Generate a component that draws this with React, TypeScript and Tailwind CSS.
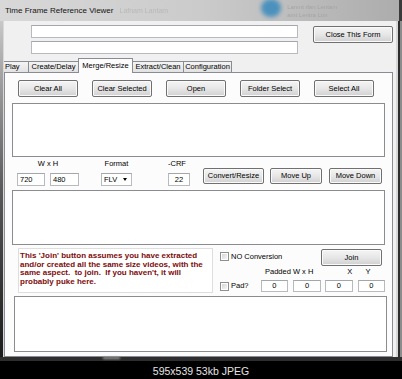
const font = "font-['Liberation_Sans',Arial,sans-serif]";

type BoxProps = {
    label?: string;
    className?: string;
};

const Btn = ({ label, className }: BoxProps) => (
    <div
        className={`flex items-center justify-center rounded-[2px] border border-[#707070] bg-linear-to-b from-[#f4f4f4] via-[#e7e7e7] to-[#d0d0d0] shadow-[inset_0_0_0_1px_#fafafa] text-[7.5px] leading-none text-black whitespace-nowrap ${className}`}
    >
        {label}
    </div>
);

const TextBox = ({ label, className }: BoxProps) => (
    <div
        className={`flex items-center border border-[#b8bac0] border-t-[#a3a6ad] bg-white text-[7.5px] leading-none text-black ${className}`}
    >
        {label}
    </div>
);

const ListBox = ({ className }: BoxProps) => (
    <div className={`border border-[#8a8c90] bg-white ${className}`} />
);

const Check = ({ label }: BoxProps) => (
    <div className="flex items-center">
        <div className="w-[9px] h-[9px] border border-[#8e8f8f] bg-white p-[1px]">
            <div className="w-full h-full bg-linear-to-br from-[#d6d6d6] to-[#f6f6f6]" />
        </div>
        <span className="ml-[2px] text-[7.5px] leading-none text-black whitespace-nowrap">
            {label}
        </span>
    </div>
);

const App = () => {
    return (
        <div
            className={`w-[402px] h-[379px] bg-black flex flex-col overflow-hidden ${font}`}
        >
            <div className="h-[361px] flex flex-col">
                {/* title bar */}
                <div className="h-[21px] flex items-center bg-linear-to-r from-[#d8d8d8] via-[#cbcbcb] to-[#acacac] overflow-hidden">
                    <span className="ml-[5px] text-[8px] leading-none text-[#141414] whitespace-nowrap">
                        Time Frame Reference Viewer
                    </span>
                    <span className="ml-[6px] text-[7px] leading-none text-[#b8b8b8] blur-[0.6px] whitespace-nowrap">
                        Lafnam Lantam
                    </span>
                    <div className="ml-[93px] -mt-[6px] w-[20px] h-[18px] rounded-full bg-[#2f86bd] blur-[2px] opacity-80" />
                    <div className="ml-[6px] flex flex-col gap-[2px] text-[6px] leading-none text-[#a4a4a4] blur-[0.7px] whitespace-nowrap">
                        <span>Lanmt rlan Lentam</span>
                        <span>amt Lentra Ltm</span>
                    </div>
                    <div className="ml-auto w-[3px] h-full bg-[#3a3a3a]" />
                </div>

                <div className="flex-1 flex">
                    {/* left frame */}
                    <div className="w-[4px] flex">
                        <div className="w-[3px] bg-linear-to-b from-[#c8c8c8] via-[#5a5a5a] to-[#1c1c1c]" />
                        <div className="w-[1px] bg-[#d8d8d8]" />
                    </div>

                    {/* client area */}
                    <div className="w-[392px] bg-[#f0f0f0] flex flex-col">
                        <div className="h-[37px] flex">
                            <div className="ml-[27px] mt-[4px] flex flex-col gap-[3px]">
                                <TextBox className="w-[267px] h-[13px]" />
                                <TextBox className="w-[267px] h-[13px]" />
                            </div>
                            <Btn
                                label="Close This Form"
                                className="ml-[15px] mt-[5px] w-[80px] h-[17px]"
                            />
                        </div>

                        {/* tabs */}
                        <div className="h-[15px] flex items-end relative z-10 text-[7.5px] leading-none text-black whitespace-nowrap">
                            <div className="w-[25px] h-[11px] mb-[1px] flex items-center pl-[1px] border-t border-r border-[#898c95] bg-linear-to-b from-[#f4f4f4] to-[#e2e2e2]">
                                Play
                            </div>
                            <div className="w-[51px] h-[11px] mb-[1px] -ml-[1px] flex items-center justify-center border-t border-x border-[#898c95] bg-linear-to-b from-[#f4f4f4] to-[#e2e2e2]">
                                Create/Delay
                            </div>
                            <div className="w-[55px] h-[15px] -ml-[1px] flex items-center justify-center pb-[1px] border-t border-x border-[#898c95] bg-[#fcfcfc]">
                                Merge/Resize
                            </div>
                            <div className="w-[52px] h-[11px] mb-[1px] -ml-[1px] flex items-center justify-center border-t border-x border-[#898c95] bg-linear-to-b from-[#f4f4f4] to-[#e2e2e2]">
                                Extract/Clean
                            </div>
                            <div className="w-[49px] h-[11px] mb-[1px] -ml-[1px] flex items-center justify-center border-t border-x border-[#898c95] bg-linear-to-b from-[#f4f4f4] to-[#e2e2e2]">
                                Configuration
                            </div>
                        </div>

                        {/* tab page */}
                        <div className="-mt-[1px] w-[389px] h-[285px] border border-[#898c95] bg-[#fcfcfc] flex flex-col">
                            <div className="ml-[13px] mt-[7px] flex gap-[14px]">
                                <Btn label="Clear All" className="w-[60px] h-[17px]" />
                                <Btn label="Clear Selected" className="w-[60px] h-[17px]" />
                                <Btn label="Open" className="w-[60px] h-[17px]" />
                                <Btn label="Folder Select" className="w-[60px] h-[17px]" />
                                <Btn label="Select All" className="w-[60px] h-[17px]" />
                            </div>

                            <ListBox className="ml-[7px] mt-[6px] w-[373px] h-[54px]" />

                            <div className="ml-[12px] mt-[1px] flex text-[7.5px] leading-none text-black whitespace-nowrap">
                                <div className="w-[62px] flex flex-col">
                                    <div className="h-[12px] flex items-center justify-center">
                                        W x H
                                    </div>
                                    <div className="mt-[3px] flex gap-[5px]">
                                        <TextBox label="720" className="w-[28px] h-[13px] pl-[2px]" />
                                        <TextBox label="480" className="w-[29px] h-[13px] pl-[2px]" />
                                    </div>
                                </div>
                                <div className="ml-[22px] w-[31px] flex flex-col">
                                    <div className="h-[12px] flex items-center justify-center">
                                        Format
                                    </div>
                                    <div className="mt-[3px] w-[31px] h-[13px] flex items-center pl-[2px] border border-[#b8bac0] border-t-[#a3a6ad] bg-white">
                                        FLV
                                        <div className="ml-[6px] w-0 h-0 border-x-[2.5px] border-t-[3px] border-x-transparent border-t-black" />
                                    </div>
                                </div>
                                <div className="ml-[36px] w-[22px] flex flex-col">
                                    <div className="h-[12px] flex items-center">
                                        -CRF
                                    </div>
                                    <TextBox label="22" className="mt-[3px] w-[22px] h-[13px] justify-center" />
                                </div>
                                <div className="ml-[13px] mt-[10px] flex">
                                    <Btn label="Convert/Resize" className="w-[61px] h-[16px]" />
                                    <Btn label="Move Up" className="ml-[6px] w-[52px] h-[16px]" />
                                    <Btn label="Move Down" className="ml-[7px] w-[53px] h-[16px]" />
                                </div>
                            </div>

                            <ListBox className="ml-[7px] mt-[4px] w-[373px] h-[55px]" />

                            <div className="mt-[3px] flex">
                                <div className="ml-[13px] w-[195px] h-[45px] border border-[#dedede] bg-white pl-[1px] pt-[3px] text-[8px] leading-[8.7px] font-bold text-[#7d0b0b] whitespace-pre overflow-hidden">
                                    <div>This 'Join' button assumes you have extracted</div>
                                    <div>and/or created all the same size videos, with the</div>
                                    <div>same aspect.  to join.  If you haven't, it will</div>
                                    <div>probably puke here.</div>
                                </div>

                                <div className="ml-[7px] w-[165px] flex flex-col text-[7.5px] leading-none text-black whitespace-nowrap">
                                    <div className="h-[18px] flex">
                                        <div className="mt-[4px] h-[9px] flex">
                                            <Check label="NO Conversion" />
                                        </div>
                                        <Btn label="Join" className="ml-auto mr-[3px] mt-[1px] w-[61px] h-[17px]" />
                                    </div>
                                    <div className="h-[12px] flex items-center">
                                        <span className="ml-[45px]">Padded W x H</span>
                                        <span className="ml-[34px]">X</span>
                                        <span className="ml-[13px]">Y</span>
                                    </div>
                                    <div className="mt-[2px] flex items-center">
                                        <Check label="Pad?" />
                                        <TextBox label="0" className="ml-[12px] w-[28px] h-[12px] justify-center" />
                                        <TextBox label="0" className="ml-[5px] w-[29px] h-[12px] justify-center" />
                                        <TextBox label="0" className="ml-[4px] w-[28px] h-[12px] justify-center" />
                                        <TextBox label="0" className="ml-[5px] w-[28px] h-[12px] justify-center" />
                                    </div>
                                </div>
                            </div>

                            <ListBox className="ml-[9px] mt-[3px] w-[373px] h-[56px]" />
                        </div>
                    </div>

                    {/* right frame */}
                    <div className="w-[6px] flex">
                        <div className="w-[2px] bg-[#d6d6d6]" />
                        <div className="w-[2px] bg-[#2c2c2c]" />
                        <div className="w-[2px] bg-[#8c8c8c]" />
                    </div>
                </div>

                {/* bottom frame */}
                <div className="h-[4px] flex bg-[#2e2e2e]">
                    <div className="ml-[103px] w-[17px] h-[2px] bg-[#a0a0a0] blur-[1px]" />
                </div>
            </div>

            <div className="flex-1 flex items-center justify-center pt-[2px] text-[10.5px] leading-none text-[#e4e4e4]">
                595x539 53kb JPEG
            </div>
        </div>
    );
};

export default App;
